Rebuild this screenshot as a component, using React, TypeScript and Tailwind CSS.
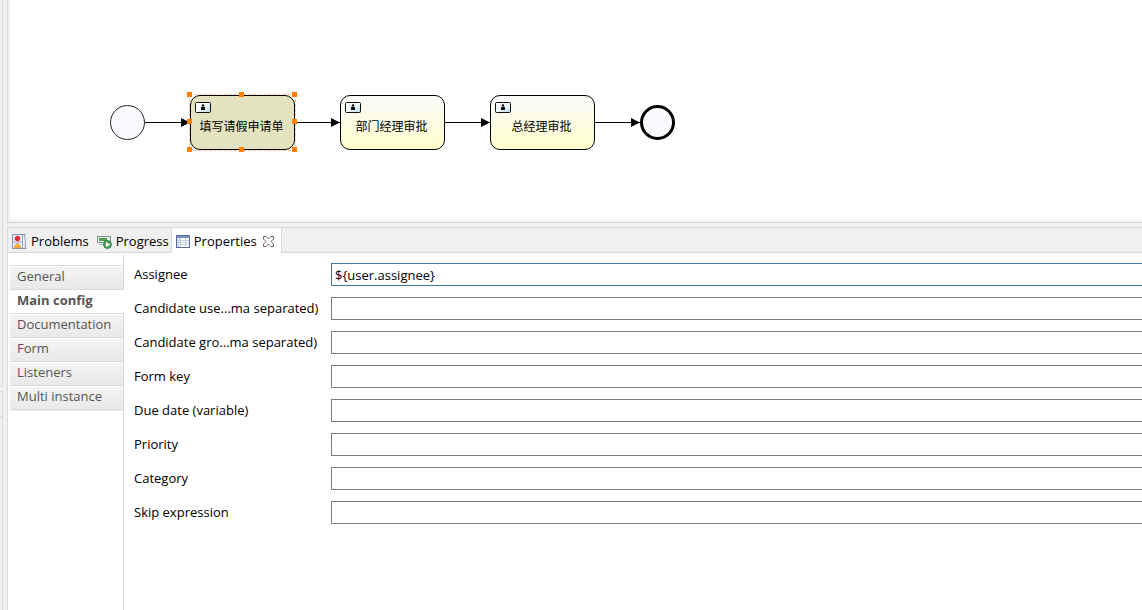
import React from 'react';

const tasks = [
    { id: 'apply', label: '填写请假申请单', x: 180, selected: true },
    { id: 'manager', label: '部门经理审批', x: 330, selected: false },
    { id: 'director', label: '总经理审批', x: 480, selected: false },
];

const flows = [
    { from: 135, to: 180 },
    { from: 285, to: 330 },
    { from: 435, to: 480 },
    { from: 585, to: 630 },
];

const handles = [
    [179, 94], [231, 94], [284, 94],
    [179, 121], [284, 121],
    [179, 149], [231, 149], [284, 149],
];

const sections = ['General', 'Main config', 'Documentation', 'Form', 'Listeners', 'Multi instance'];

const fields = [
    { id: 'assignee', label: 'Assignee', value: '${user.assignee}' },
    { id: 'candidate-users', label: 'Candidate use...ma separated)', value: '' },
    { id: 'candidate-groups', label: 'Candidate gro...ma separated)', value: '' },
    { id: 'form-key', label: 'Form key', value: '' },
    { id: 'due-date', label: 'Due date (variable)', value: '' },
    { id: 'priority', label: 'Priority', value: '' },
    { id: 'category', label: 'Category', value: '' },
    { id: 'skip-expression', label: 'Skip expression', value: '' },
];

function UserTaskIcon() {
    return (
        <svg className="absolute left-1 top-1.5" width="16" height="11" viewBox="0 0 16 11">
            <defs>
                <linearGradient id="userTask" x1="0" x2="1" y1="0" y2="1">
                    <stop offset="0" stopColor="#ffffff" />
                    <stop offset="0.5" stopColor="#f2f9fc" />
                    <stop offset="1" stopColor="#b4d8ea" />
                </linearGradient>
            </defs>
            <rect x="0.5" y="0.5" width="15" height="10" rx="1" fill="url(#userTask)" stroke="#111" />
            <circle cx="8" cy="3.5" r="1.3" fill="#111" />
            <path d="M6 5h4v3H6z" fill="#111" />
        </svg>
    );
}

function ProblemsIcon() {
    return (
        <svg width="15" height="16" viewBox="0 0 15 16">
            <path d="M.5 .5h13c-2 2 0 4 0 7s-1 5 .5 7H.5z" fill="#e9eef8" stroke="#8592b2" />
            <path d="M10.5 1v13M1 8h9" stroke="#9ba9c7" />
            <circle cx="5.5" cy="4.5" r="2.7" fill="#dc2f38" />
            <path d="M5.5 9l3 3v2h-6v-2z" fill="#f5ae3d" stroke="#d98b2b" strokeWidth=".6" />
        </svg>
    );
}

function ProgressIcon() {
    return (
        <svg width="15" height="16" viewBox="0 0 15 16">
            <rect x=".5" y="2.5" width="13" height="6" fill="#eef3ee" stroke="#7d968b" />
            <path d="M2 4h8v3H2z" fill="#4da154" />
            <path d="M2 10.5h5" stroke="#a0b5c8" />
            <circle cx="10.5" cy="10.5" r="3.9" fill="#5fa86c" stroke="#2b7840" />
            <path d="M9 8l4 2.5L9 13z" fill="#fff" />
        </svg>
    );
}

function PropertiesIcon() {
    return (
        <svg width="14" height="13" viewBox="0 0 14 13">
            <rect x=".5" y=".5" width="13" height="12" fill="#fbfcfe" stroke="#536b9b" />
            <path d="M1 1h12v2H1z" fill="#7b91bd" />
            <path d="M1 3h3v9H1z" fill="#dce5f3" />
            <path d="M4.5 3v9M9.5 3v9M1 5.5h12M1 7.5h12M1 9.5h12" stroke="#b5c1d6" strokeWidth=".7" />
        </svg>
    );
}

function CloseIcon() {
    return (
        <svg width="11" height="11" viewBox="0 0 11 11" fill="none" stroke="#666">
            <path d="M.5 .5h2.5l2.5 2.5L8 .5h2.5V3L8 5.5 10.5 8v2.5H8L5.5 8 3 10.5H.5V8L3 5.5.5 3z" />
        </svg>
    );
}

function Diagram() {
    return (
        <main className="relative h-[220px] shrink-0 overflow-hidden bg-white">
            <div className="absolute left-[100px] top-[105px] size-[35px] rounded-full border border-[#222] bg-[#f9fafd]" />
            <div className="absolute left-[179px] top-[94px] h-[57px] w-[107px] border border-dashed border-[#fbc796]" />
            {tasks.map((task) => (
                <div
                    key={task.id}
                    className={`absolute top-[95px] flex h-[55px] w-[105px] items-center justify-center rounded-[10px] border border-black pt-1.5 pr-0.5 font-['Noto_Sans_CJK_SC',sans-serif] text-xs whitespace-nowrap text-black ${
                        task.selected ? 'bg-[#e4e3bf]' : 'bg-linear-to-b from-[#fafafa] to-[#ffffcb]'
                    }`}
                    style={{ left: task.x }}
                >
                    <UserTaskIcon />
                    {task.label}
                </div>
            ))}
            <div className="absolute left-[630px] top-[105px] size-[35px] rounded-full border-3 border-black bg-[#f9fafd]" />
            <svg className="absolute left-0 top-0" width="700" height="200" viewBox="0 0 700 200">
                {flows.map((flow) => (
                    <g key={flow.from}>
                        <path d={`M${flow.from} 122.5H${flow.to}`} stroke="#000" />
                        <path d={`M${flow.to - 9} 118v9l9-4.5z`} fill="#000" />
                    </g>
                ))}
                {handles.map(([x, y]) => (
                    <rect key={`${x}-${y}`} x={x - 2} y={y - 2} width="5" height="5" fill="#ff8000" />
                ))}
            </svg>
        </main>
    );
}

function ViewTabs() {
    return (
        <div className="flex h-[25px] shrink-0 text-[13px] text-black">
            <button className="flex items-center gap-1 border-b border-[#d9d9d9] pt-1 pl-1 pr-2">
                <ProblemsIcon />
                Problems
            </button>
            <button className="flex items-center gap-1 border-b border-[#d9d9d9] pt-1 pr-0.5">
                <ProgressIcon />
                Progress
            </button>
            <div className="flex items-center gap-1.5 border-x border-[#d9d9d9] bg-white pt-0.5 pl-1 pr-[7px]">
                <button className="flex items-center gap-1">
                    <PropertiesIcon />
                    Properties
                </button>
                <button aria-label="Close Properties">
                    <CloseIcon />
                </button>
            </div>
            <div className="flex-1 border-b border-[#d9d9d9]" />
        </div>
    );
}

function SectionList() {
    return (
        <nav className="mt-0.5 flex w-[116px] shrink-0 flex-col pl-0.5 text-[13px] text-[#555]">
            <div className="h-2.5 border-r border-[#d9d9d9]" />
            {sections.map((section) =>
                section === 'Main config' ? (
                    <button key={section} className="h-6 border-t border-[#d9d9d9] pb-0.5 pl-[7px] text-left font-bold">
                        {section}
                    </button>
                ) : (
                    <button
                        key={section}
                        className="h-6 border-t border-r border-[#d9d9d9] bg-linear-to-b from-[#f4f4f4] to-[#e9e9e9] pb-0.5 pl-[7px] text-left shadow-[inset_0_1px_0_#fff]"
                    >
                        {section}
                    </button>
                ),
            )}
            <div className="flex-1 border-t border-r border-[#d9d9d9] shadow-[inset_0_1px_0_#eee]" />
        </nav>
    );
}

function MainConfig() {
    return (
        <form className="flex min-w-0 flex-1 flex-col gap-[11px] pl-2.5 pt-2.5 text-[13px] text-black">
            {fields.map((field) => (
                <div key={field.id} className="flex h-[23px] items-center">
                    <label htmlFor={field.id} className="w-[197px] shrink-0 whitespace-nowrap">
                        {field.label}
                    </label>
                    <input
                        id={field.id}
                        type="text"
                        defaultValue={field.value}
                        className={`h-full min-w-0 flex-1 border border-r-0 bg-white px-[3px] outline-none ${
                            field.value ? 'border-[#3f75a2]' : 'border-[#7a7a7a]'
                        }`}
                    />
                </div>
            ))}
        </form>
    );
}

export default function App() {
    return (
        <div className="flex min-h-screen bg-[#f0f0f0] font-['Open_Sans',sans-serif]">
            <aside className="flex w-[3px] shrink-0 flex-col gap-1">
                <div className="h-[387px] border-r border-b border-[#d9d9d9]" />
                <div className="flex-1 border-t border-r border-[#d9d9d9]">
                    <div className="h-[25px] border-b border-[#d9d9d9]" />
                </div>
            </aside>
            <div className="ml-1 flex min-w-0 flex-1 flex-col gap-1">
                <div className="border-b border-l border-[#d9d9d9] pb-0.5 pl-0.5">
                    <Diagram />
                </div>
                <section className="flex flex-1 flex-col border-t border-l border-[#d9d9d9]">
                    <ViewTabs />
                    <div className="flex flex-1 bg-white">
                        <SectionList />
                        <MainConfig />
                    </div>
                </section>
            </div>
        </div>
    );
}
